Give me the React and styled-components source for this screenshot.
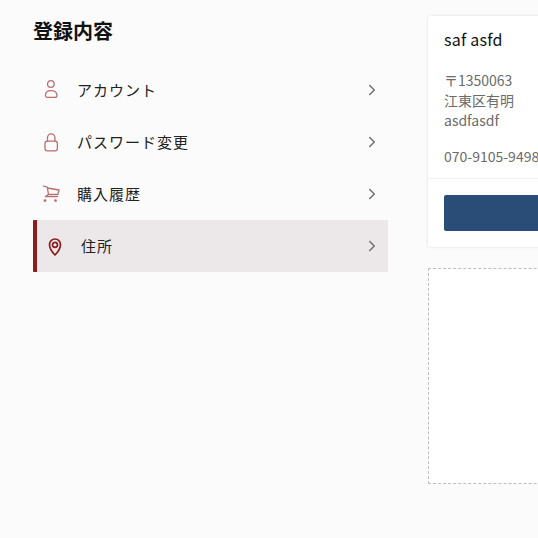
import React from "react";
import styled, { createGlobalStyle } from "styled-components";
import { ChevronRight } from "lucide-react";

const Global = createGlobalStyle`
  html, body { margin: 0; padding: 0; background: #fbfbfb; overflow: hidden; }
  body { font-family: "Noto Sans CJK JP", "Noto Sans", sans-serif; }
`;
const Page = styled.div`
  width: 538px; height: 538px; overflow: hidden; display: flex; gap: 40px;
  padding: 15px 0 0 33px; box-sizing: border-box;
`;
const Side = styled.nav`width: 355px; flex: none;`;
const Title = styled.h2`
  margin: 0 0 17px; font-size: 20px; line-height: 32px; font-weight: 700; color: #111;
`;
const Item = styled.div`
  height: 52px; display: flex; align-items: center; box-sizing: border-box;
  padding: 0 7px 0 6px;
  background: ${p => (p.$active ? "#ece8e9" : "transparent")};
  border-left: ${p => (p.$active ? "4px solid #8c1c1f" : "0")};
  border-radius: 1px;
  color: ${p => (p.$active ? "#8c1c1f" : "#b96f70")};
`;
const IconSlot = styled.span`width: 38px; flex: none; display: flex; margin-top: 2px;`;
const Label = styled.span`flex: 1; font-size: 15px; letter-spacing: 1px; color: #222; line-height: 24px;`;
const Chevron = styled.span`display: flex; color: #707070;`;
const Main = styled.div`width: 320px; flex: none; display: flex; flex-direction: column; gap: 21px; margin-top: 1px;`;
const Card = styled.section`
  background: #fff; box-shadow: 0 0 3px rgba(0,0,0,.12); border-radius: 2px;
`;
const Body = styled.div`padding: 10px 16px 12px;`;
const Name = styled.div`font-size: 16px; letter-spacing: 0.25px; line-height: 26px; color: #111; margin-bottom: 18px;`;
const Addr = styled.div`font-size: 14px; line-height: 20px; color: #6b6b6b;`;
const Phone = styled(Addr)`margin-top: 16px;`;
const Foot = styled.div`border-top: 1px solid #f0f0f0; padding: 16px;`;
const Button = styled.div`height: 36px; background: #2a4d77; border-radius: 2px;`;
const Empty = styled.div`height: 216px; box-sizing: border-box; background: #fff; border: 1px dashed #bdbdbd;`;

const Svg = ({ children, width = 1.3 }) => (
  <svg width="24" height="24" viewBox="0 0 24 24" fill="none" stroke="currentColor" strokeWidth={width} strokeLinecap="round" strokeLinejoin="round">
    {children}
  </svg>
);
const UserIcon = () => (
  <Svg>
    <circle cx="11.8" cy="5" r="3.3" />
    <path d="M6.4 16.5C6.4 13.4 8.8 11.6 12 11.6S18 13.4 18 16.5C18 17.8 16.5 18.4 15.5 18.4H8.9C7.9 18.4 6.4 17.8 6.4 16.5Z" />
  </Svg>
);
const LockIcon = () => (
  <Svg>
    <rect x="6" y="10.2" width="12.4" height="9.6" rx="2.4" />
    <path d="M8.5 10V6.5A3.7 3.7 0 0 1 15.9 6.5V10" />
  </Svg>
);
const CartIcon = () => (
  <Svg>
    <path d="M4.3 3L8.3 4.2L9.5 11.5L6.5 13.6H18.5" />
    <path d="M8.5 5L20 7L18.8 11.5H9.5" />
    <circle cx="6" cy="17.6" r="0.8" />
    <circle cx="16.5" cy="17.6" r="0.8" />
  </Svg>
);
const PinIcon = () => (
  <Svg width={1.7}>
    <path d="M12 20C9 17 6.5 14 6.5 9.5A5.5 5.5 0 0 1 17.5 9.5C17.5 14 15 17 12 20Z" />
    <circle cx="12" cy="9.8" r="2.5" />
  </Svg>
);

const items = [
  { label: "アカウント", Icon: UserIcon },
  { label: "パスワード変更", Icon: LockIcon },
  { label: "購入履歴", Icon: CartIcon },
  { label: "住所", Icon: PinIcon, active: true },
];

export default function App() {
  return (
    <Page>
      <Global />
      <Side>
        <Title>登録内容</Title>
        {items.map(({ label, Icon, active }) => (
          <Item key={label} $active={active}>
            <IconSlot><Icon /></IconSlot>
            <Label>{label}</Label>
            <Chevron><ChevronRight size={18} strokeWidth={2} /></Chevron>
          </Item>
        ))}
      </Side>
      <Main>
        <Card>
          <Body>
            <Name>saf asfd</Name>
            <Addr>〒1350063<br />江東区有明<br />asdfasdf</Addr>
            <Phone>070-9105-9498</Phone>
          </Body>
          <Foot><Button /></Foot>
        </Card>
        <Empty />
      </Main>
    </Page>
  );
}
